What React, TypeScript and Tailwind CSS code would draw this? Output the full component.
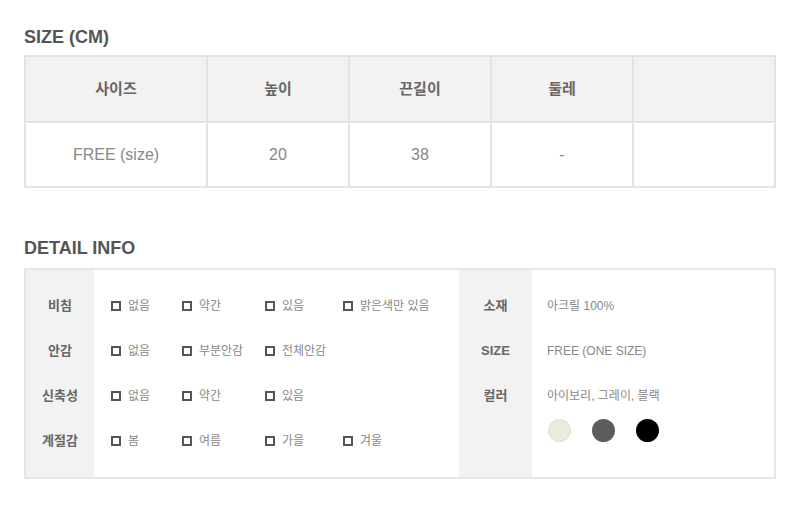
import React from "react";

const font = { fontFamily: '"Liberation Sans", "Noto Sans CJK KR", sans-serif' };

function Check({ label }: { label: string }) {
  return (
    <div className="flex items-center gap-[7px]">
      <span className="block w-[10px] h-[10px] border-[2px] border-[#555]" />
      <span className="text-[12px] text-[#888]">{label}</span>
    </div>
  );
}

const rows: { label: string; opts: string[] }[] = [
  { label: "비침", opts: ["없음", "약간", "있음", "밝은색만 있음"] },
  { label: "안감", opts: ["없음", "부분안감", "전체안감"] },
  { label: "신축성", opts: ["없음", "약간", "있음"] },
  { label: "계절감", opts: ["봄", "여름", "가을", "겨울"] },
];

export default function App() {
  return (
    <div className="w-[800px] h-[527px] bg-white px-[24px] pt-[27px]" style={font}>
      <div className="text-[18px] font-bold text-[#555] leading-[20px]">SIZE (CM)</div>
      <div className="mt-[8px] w-[752px] border-[2px] border-[#e3e3e3] grid grid-cols-[182px_142px_142px_142px_1fr]">
        {["사이즈", "높이", "끈길이", "둘레", ""].map((h, i) => (
          <div
            key={i}
            className={`h-[66px] bg-[#f2f2f2] border-b-[2px] border-[#e3e3e3] flex items-center justify-center text-[15px] font-bold text-[#666] ${i < 4 ? "border-r-[2px]" : ""}`}
          >
            {h}
          </div>
        ))}
        {["FREE (size)", "20", "38", "-", ""].map((h, i) => (
          <div
            key={i}
            className={`h-[63px] flex items-center justify-center text-[16px] text-[#888] border-[#e3e3e3] ${i < 4 ? "border-r-[2px]" : ""}`}
          >
            {h}
          </div>
        ))}
      </div>

      <div className="mt-[50px] text-[18px] font-bold text-[#555] leading-[20px]">DETAIL INFO</div>
      <div className="mt-[10px] w-[752px] h-[211px] border-[2px] border-[#e6e6e6] flex">
        <div className="w-[68px] bg-[#f2f2f2] pt-[13px] flex flex-col">
          {rows.map((r) => (
            <div key={r.label} className="h-[45px] flex items-center justify-center text-[13px] font-bold text-[#666]">
              {r.label}
            </div>
          ))}
        </div>
        <div className="w-[365px] pt-[13px] pl-[17px] flex flex-col">
          {rows.map((r) => (
            <div key={r.label} className="h-[45px] grid grid-cols-[71px_83px_78px_1fr] items-center">
              {r.opts.map((o) => (
                <Check key={o} label={o} />
              ))}
            </div>
          ))}
        </div>
        <div className="w-[73px] bg-[#f2f2f2] pt-[13px] flex flex-col">
          {["소재", "SIZE", "컬러"].map((l) => (
            <div key={l} className="h-[45px] flex items-center justify-center text-[13px] font-bold text-[#666]">
              {l}
            </div>
          ))}
        </div>
        <div className="flex-1 pt-[13px] pl-[15px] flex flex-col text-[12px] text-[#888]">
          <div className="h-[45px] flex items-center">아크릴 100%</div>
          <div className="h-[45px] flex items-center">FREE (ONE SIZE)</div>
          <div className="h-[45px] flex items-center">아이보리, 그레이, 블랙</div>
          <div className="flex gap-[21px] pl-[1px] mt-[1px]">
            <span className="block w-[23px] h-[23px] rounded-full bg-[#ebe9e0] border border-[#dcdcd4]" />
            <span className="block w-[23px] h-[23px] rounded-full bg-[#5b5d5e]" />
            <span className="block w-[23px] h-[23px] rounded-full bg-black" />
          </div>
        </div>
      </div>
    </div>
  );
}
